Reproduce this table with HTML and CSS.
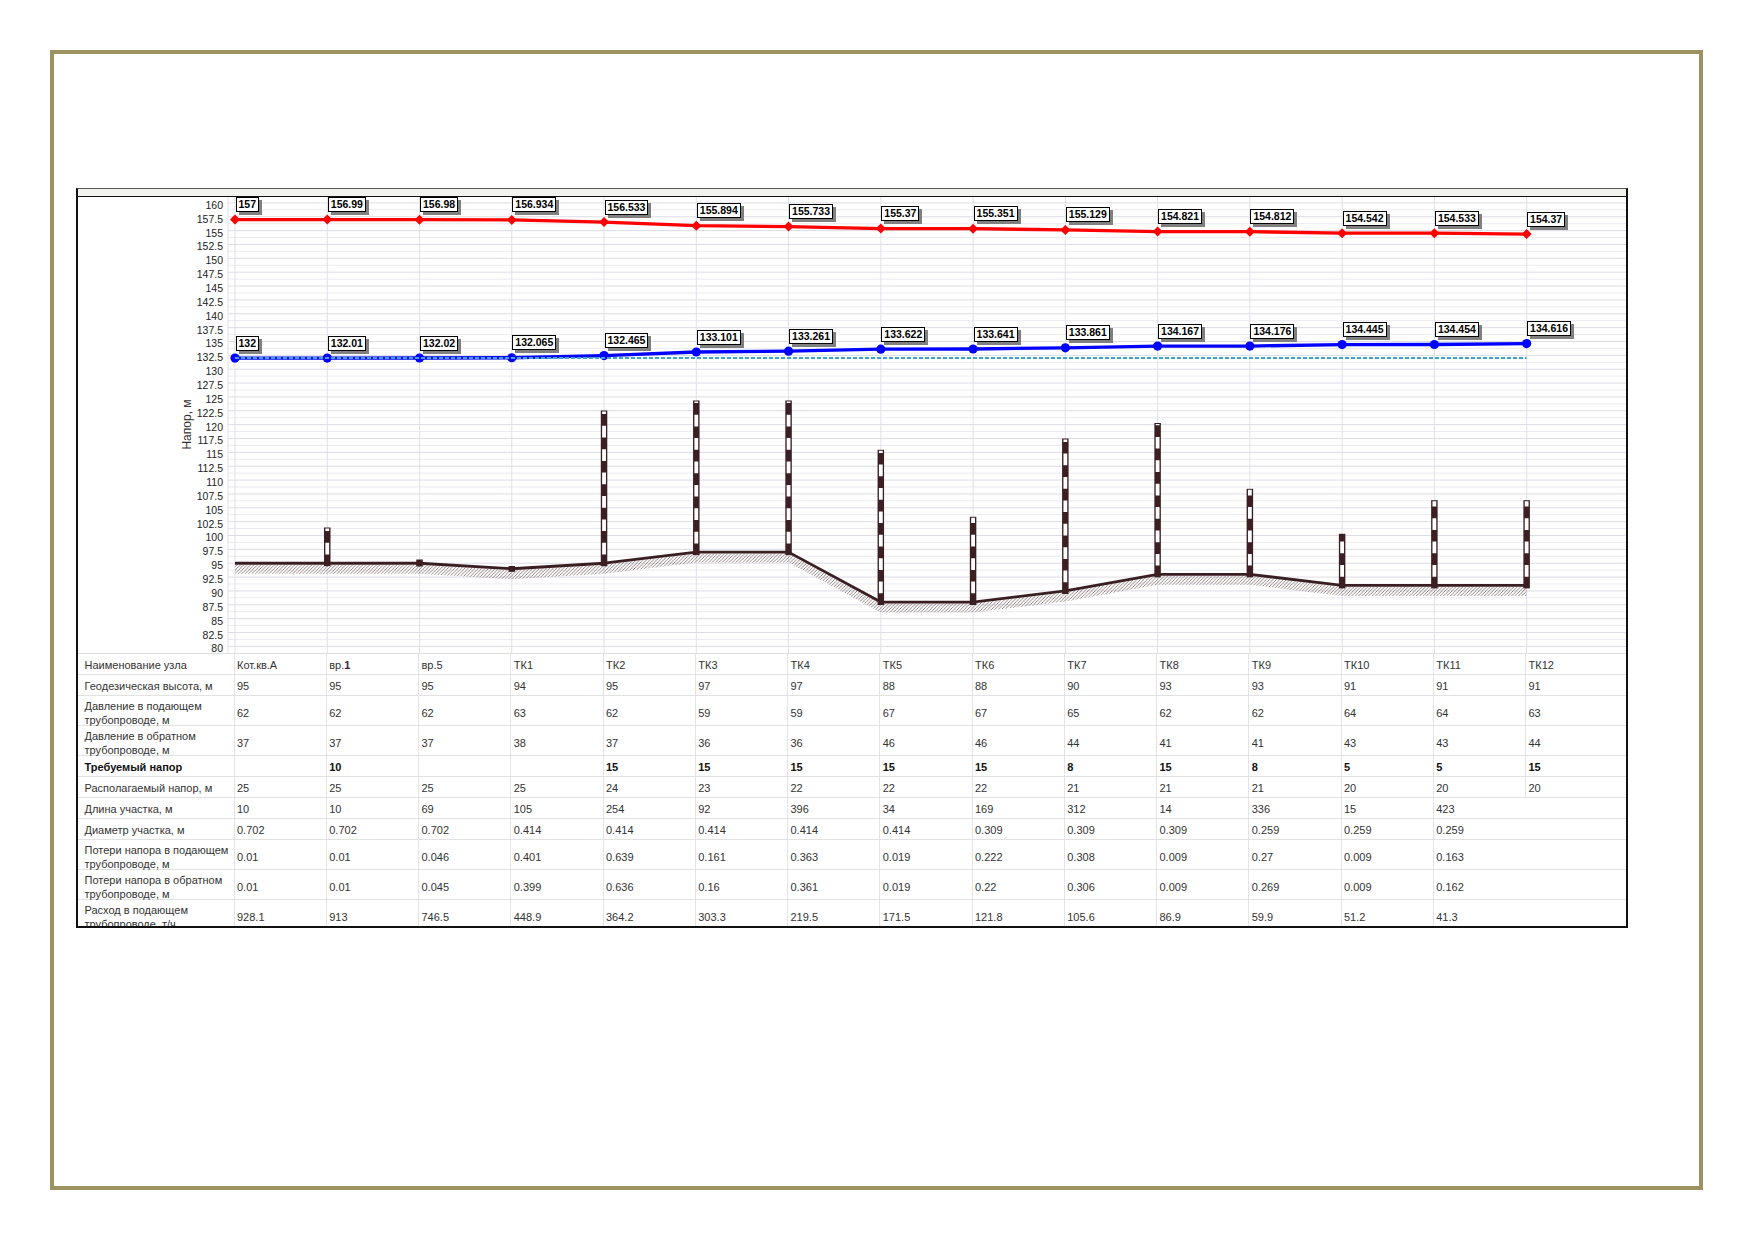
FILE: index.html
```html
<!DOCTYPE html>
<html lang="ru">
<head>
<meta charset="utf-8">
<title>Пьезометрический график</title>
<link rel="stylesheet" href="styles.css">
</head>
<body>
<div class="sheet">
  <div class="panel">
    <div class="strip"></div>
    <div class="chart">
      <svg class="chart-svg" width="1548" height="456" viewBox="78 197.5 1548 456" xmlns="http://www.w3.org/2000/svg">
        <defs>
          <pattern id="hatch" width="3.4" height="3.4" patternUnits="userSpaceOnUse">
            <path class="hatch-line" d="M-0.85,0.85L0.85,-0.85M0,3.4L3.4,0M2.55,4.25L4.25,2.55"/>
          </pattern>
        </defs>
        <path class="grid-minor" d="M228 210.33H1626M228 224.19H1626M228 238.04H1626M228 251.9H1626M228 265.76H1626M228 279.62H1626M228 293.47H1626M228 307.33H1626M228 321.19H1626M228 335.04H1626M228 348.9H1626M228 362.76H1626M228 376.61H1626M228 390.47H1626M228 404.33H1626M228 418.19H1626M228 432.04H1626M228 445.9H1626M228 459.76H1626M228 473.61H1626M228 487.47H1626M228 501.33H1626M228 515.18H1626M228 529.04H1626M228 542.9H1626M228 556.76H1626M228 570.61H1626M228 584.47H1626M228 598.33H1626M228 612.18H1626M228 626.04H1626M228 639.9H1626"/>
        <path class="grid-major" d="M228 203.4H1626M228 217.26H1626M228 231.12H1626M228 244.98H1626M228 258.84H1626M228 272.69H1626M228 286.55H1626M228 300.41H1626M228 314.27H1626M228 328.13H1626M228 341.99H1626M228 355.85H1626M228 369.71H1626M228 383.56H1626M228 397.42H1626M228 411.28H1626M228 425.14H1626M228 439H1626M228 452.86H1626M228 466.72H1626M228 480.58H1626M228 494.43H1626M228 508.29H1626M228 522.15H1626M228 536.01H1626M228 549.87H1626M228 563.73H1626M228 577.59H1626M228 591.45H1626M228 605.3H1626M228 619.16H1626M228 633.02H1626M228 646.88H1626"/>
        <path class="grid-vert" d="M228 197.5V653.5M235 197.5V653.5M327.26 197.5V653.5M419.52 197.5V653.5M511.78 197.5V653.5M604.04 197.5V653.5M696.3 197.5V653.5M788.56 197.5V653.5M880.82 197.5V653.5M973.08 197.5V653.5M1065.34 197.5V653.5M1157.6 197.5V653.5M1249.86 197.5V653.5M1342.12 197.5V653.5M1434.38 197.5V653.5M1526.64 197.5V653.5"/>

        <g class="ylabels" transform="translate(0 2.2)">
          <text x="223" y="207.2">160</text>
          <text x="223" y="221.06">157.5</text>
          <text x="223" y="234.92">155</text>
          <text x="223" y="248.78">152.5</text>
          <text x="223" y="262.64">150</text>
          <text x="223" y="276.49">147.5</text>
          <text x="223" y="290.35">145</text>
          <text x="223" y="304.21">142.5</text>
          <text x="223" y="318.07">140</text>
          <text x="223" y="331.93">137.5</text>
          <text x="223" y="345.79">135</text>
          <text x="223" y="359.65">132.5</text>
          <text x="223" y="373.51">130</text>
          <text x="223" y="387.36">127.5</text>
          <text x="223" y="401.22">125</text>
          <text x="223" y="415.08">122.5</text>
          <text x="223" y="428.94">120</text>
          <text x="223" y="442.8">117.5</text>
          <text x="223" y="456.66">115</text>
          <text x="223" y="470.52">112.5</text>
          <text x="223" y="484.38">110</text>
          <text x="223" y="498.23">107.5</text>
          <text x="223" y="512.09">105</text>
          <text x="223" y="525.95">102.5</text>
          <text x="223" y="539.81">100</text>
          <text x="223" y="553.67">97.5</text>
          <text x="223" y="567.53">95</text>
          <text x="223" y="581.39">92.5</text>
          <text x="223" y="595.25">90</text>
          <text x="223" y="609.1">87.5</text>
          <text x="223" y="622.96">85</text>
          <text x="223" y="636.82">82.5</text>
          <text x="223" y="650.68">80</text>
        </g>
        <text class="ytitle" transform="translate(190.8 425) rotate(-90)">Напор, м</text>

        <polygon class="ground-hatch" points="235,565 327.26,565 419.52,565 511.78,570.6 604.04,565 696.3,553.9 788.56,553.9 880.82,603.8 973.08,603.8 1065.34,592.8 1157.6,576.1 1249.86,576.1 1342.12,587.2 1434.38,587.2 1526.64,587.2 1526.64,596.4 1434.38,596.4 1342.12,596.4 1249.86,585.3 1157.6,585.3 1065.34,602 973.08,613 880.82,613 788.56,563.1 696.3,563.1 604.04,574.2 511.78,579.8 419.52,574.2 327.26,574.2 235,574.2"/>
        <polyline class="ground-line" points="235,563.73 327.26,563.73 419.52,563.73 511.78,569.27 604.04,563.73 696.3,552.64 788.56,552.64 880.82,602.53 973.08,602.53 1065.34,591.45 1157.6,574.81 1249.86,574.81 1342.12,585.9 1434.38,585.9 1526.64,585.9"/>

        <g class="bars">
          <rect class="bar" x="324.01" y="528" width="6.5" height="38.7"/>
          <line class="bar-w" x1="327.26" y1="566.7" x2="327.26" y2="529"/>
          <rect class="bar" x="416.27" y="560" width="6.5" height="7"/>
          <rect class="bar" x="508.53" y="566.5" width="6.5" height="5.8"/>
          <rect class="bar" x="600.79" y="411" width="6.5" height="155.7"/>
          <line class="bar-w" x1="604.04" y1="566.7" x2="604.04" y2="412"/>
          <rect class="bar" x="693.05" y="401" width="6.5" height="154.6"/>
          <line class="bar-w" x1="696.3" y1="555.6" x2="696.3" y2="402"/>
          <rect class="bar" x="785.31" y="401" width="6.5" height="154.6"/>
          <line class="bar-w" x1="788.56" y1="555.6" x2="788.56" y2="402"/>
          <rect class="bar" x="877.57" y="450.3" width="6.5" height="155.2"/>
          <line class="bar-w" x1="880.82" y1="605.5" x2="880.82" y2="451.3"/>
          <rect class="bar" x="969.83" y="517.3" width="6.5" height="88.2"/>
          <line class="bar-w" x1="973.08" y1="605.5" x2="973.08" y2="518.3"/>
          <rect class="bar" x="1062.09" y="439" width="6.5" height="155.5"/>
          <line class="bar-w" x1="1065.34" y1="594.5" x2="1065.34" y2="440"/>
          <rect class="bar" x="1154.35" y="423.5" width="6.5" height="154.3"/>
          <line class="bar-w" x1="1157.6" y1="577.8" x2="1157.6" y2="424.5"/>
          <rect class="bar" x="1246.61" y="489.3" width="6.5" height="88.5"/>
          <line class="bar-w" x1="1249.86" y1="577.8" x2="1249.86" y2="490.3"/>
          <rect class="bar" x="1338.87" y="534.3" width="6.5" height="54.6"/>
          <line class="bar-w" x1="1342.12" y1="588.9" x2="1342.12" y2="535.3"/>
          <rect class="bar" x="1431.13" y="500.7" width="6.5" height="88.2"/>
          <line class="bar-w" x1="1434.38" y1="588.9" x2="1434.38" y2="501.7"/>
          <rect class="bar" x="1523.39" y="500.7" width="6.5" height="88.2"/>
          <line class="bar-w" x1="1526.64" y1="588.9" x2="1526.64" y2="501.7"/>
        </g>

        <polyline class="supply-line" points="235,220.03 327.26,220.09 419.52,220.14 511.78,220.4 604.04,222.62 696.3,226.16 788.56,227.05 880.82,229.07 973.08,229.17 1065.34,230.4 1157.6,232.11 1249.86,232.16 1342.12,233.66 1434.38,233.71 1526.64,234.61"/>
        <path class="supply-mark" d="M235 215.03l5 5-5 5-5-5zM327.26 215.09l5 5-5 5-5-5zM419.52 215.14l5 5-5 5-5-5zM511.78 215.4l5 5-5 5-5-5zM604.04 217.62l5 5-5 5-5-5zM696.3 221.16l5 5-5 5-5-5zM788.56 222.05l5 5-5 5-5-5zM880.82 224.07l5 5-5 5-5-5zM973.08 224.17l5 5-5 5-5-5zM1065.34 225.4l5 5-5 5-5-5zM1157.6 227.11l5 5-5 5-5-5zM1249.86 227.16l5 5-5 5-5-5zM1342.12 228.66l5 5-5 5-5-5zM1434.38 228.71l5 5-5 5-5-5zM1526.64 229.61l5 5-5 5-5-5z"/>

        <polyline class="return-line" points="235,358.62 327.26,358.57 419.52,358.51 511.78,358.26 604.04,356.04 696.3,352.52 788.56,351.63 880.82,349.63 973.08,349.52 1065.34,348.3 1157.6,346.61 1249.86,346.56 1342.12,345.07 1434.38,345.02 1526.64,344.12"/>
        <g class="return-mark">
          <circle cx="235" cy="358.62" r="4.6"/>
          <circle cx="327.26" cy="358.57" r="4.6"/>
          <circle cx="419.52" cy="358.51" r="4.6"/>
          <circle cx="511.78" cy="358.26" r="4.6"/>
          <circle cx="604.04" cy="356.04" r="4.6"/>
          <circle cx="696.3" cy="352.52" r="4.6"/>
          <circle cx="788.56" cy="351.63" r="4.6"/>
          <circle cx="880.82" cy="349.63" r="4.6"/>
          <circle cx="973.08" cy="349.52" r="4.6"/>
          <circle cx="1065.34" cy="348.3" r="4.6"/>
          <circle cx="1157.6" cy="346.61" r="4.6"/>
          <circle cx="1249.86" cy="346.56" r="4.6"/>
          <circle cx="1342.12" cy="345.07" r="4.6"/>
          <circle cx="1434.38" cy="345.02" r="4.6"/>
          <circle cx="1526.64" cy="344.12" r="4.6"/>
        </g>
        <path class="static-line" d="M235 358.62H1526.64"/>
      </svg>

      <div class="tag" style="left:158px;top:0.5px">157</div>
      <div class="tag" style="left:250.3px;top:0.6px">156.99</div>
      <div class="tag" style="left:342.5px;top:0.6px">156.98</div>
      <div class="tag" style="left:434.8px;top:0.9px">156.934</div>
      <div class="tag" style="left:527px;top:3.1px">156.533</div>
      <div class="tag" style="left:619.3px;top:6.7px">155.894</div>
      <div class="tag" style="left:711.6px;top:7.6px">155.733</div>
      <div class="tag" style="left:803.8px;top:9.6px">155.37</div>
      <div class="tag" style="left:896.1px;top:9.7px">155.351</div>
      <div class="tag" style="left:988.3px;top:10.9px">155.129</div>
      <div class="tag" style="left:1080.6px;top:12.6px">154.821</div>
      <div class="tag" style="left:1172.9px;top:12.7px">154.812</div>
      <div class="tag" style="left:1265.1px;top:14.2px">154.542</div>
      <div class="tag" style="left:1357.4px;top:14.2px">154.533</div>
      <div class="tag" style="left:1449.6px;top:15.1px">154.37</div>

      <div class="tag" style="left:158px;top:139.1px">132</div>
      <div class="tag" style="left:250.3px;top:139.1px">132.01</div>
      <div class="tag" style="left:342.5px;top:139px">132.02</div>
      <div class="tag" style="left:434.8px;top:138.8px">132.065</div>
      <div class="tag" style="left:527px;top:136.5px">132.465</div>
      <div class="tag" style="left:619.3px;top:133px">133.101</div>
      <div class="tag" style="left:711.6px;top:132.1px">133.261</div>
      <div class="tag" style="left:803.8px;top:130.1px">133.622</div>
      <div class="tag" style="left:896.1px;top:130px">133.641</div>
      <div class="tag" style="left:988.3px;top:128.8px">133.861</div>
      <div class="tag" style="left:1080.6px;top:127.1px">134.167</div>
      <div class="tag" style="left:1172.9px;top:127.1px">134.176</div>
      <div class="tag" style="left:1265.1px;top:125.6px">134.445</div>
      <div class="tag" style="left:1357.4px;top:125.5px">134.454</div>
      <div class="tag" style="left:1449.6px;top:124.6px">134.616</div>
    </div>

    <div class="table">
      <div class="row">
        <div class="lab">Наименование узла</div>
        <div class="cell">Кот.кв.А</div><div class="cell">вр.<span class="hl">1</span></div><div class="cell">вр.5</div><div class="cell">ТК1</div><div class="cell">ТК2</div><div class="cell">ТК3</div><div class="cell">ТК4</div><div class="cell">ТК5</div><div class="cell">ТК6</div><div class="cell">ТК7</div><div class="cell">ТК8</div><div class="cell">ТК9</div><div class="cell">ТК10</div><div class="cell">ТК11</div><div class="cell">ТК12</div>
      </div>
      <div class="row">
        <div class="lab">Геодезическая высота, м</div>
        <div class="cell">95</div><div class="cell">95</div><div class="cell">95</div><div class="cell">94</div><div class="cell">95</div><div class="cell">97</div><div class="cell">97</div><div class="cell">88</div><div class="cell">88</div><div class="cell">90</div><div class="cell">93</div><div class="cell">93</div><div class="cell">91</div><div class="cell">91</div><div class="cell">91</div>
      </div>
      <div class="row tall">
        <div class="lab">Давление в подающем<br>трубопроводе, м</div>
        <div class="cell">62</div><div class="cell">62</div><div class="cell">62</div><div class="cell">63</div><div class="cell">62</div><div class="cell">59</div><div class="cell">59</div><div class="cell">67</div><div class="cell">67</div><div class="cell">65</div><div class="cell">62</div><div class="cell">62</div><div class="cell">64</div><div class="cell">64</div><div class="cell">63</div>
      </div>
      <div class="row tall">
        <div class="lab">Давление в обратном<br>трубопроводе, м</div>
        <div class="cell">37</div><div class="cell">37</div><div class="cell">37</div><div class="cell">38</div><div class="cell">37</div><div class="cell">36</div><div class="cell">36</div><div class="cell">46</div><div class="cell">46</div><div class="cell">44</div><div class="cell">41</div><div class="cell">41</div><div class="cell">43</div><div class="cell">43</div><div class="cell">44</div>
      </div>
      <div class="row strong">
        <div class="lab">Требуемый напор</div>
        <div class="cell"></div><div class="cell">10</div><div class="cell"></div><div class="cell"></div><div class="cell">15</div><div class="cell">15</div><div class="cell">15</div><div class="cell">15</div><div class="cell">15</div><div class="cell">8</div><div class="cell">15</div><div class="cell">8</div><div class="cell">5</div><div class="cell">5</div><div class="cell">15</div>
      </div>
      <div class="row">
        <div class="lab">Располагаемый напор, м</div>
        <div class="cell">25</div><div class="cell">25</div><div class="cell">25</div><div class="cell">25</div><div class="cell">24</div><div class="cell">23</div><div class="cell">22</div><div class="cell">22</div><div class="cell">22</div><div class="cell">21</div><div class="cell">21</div><div class="cell">21</div><div class="cell">20</div><div class="cell">20</div><div class="cell">20</div>
      </div>
      <div class="row">
        <div class="lab">Длина участка, м</div>
        <div class="cell">10</div><div class="cell">10</div><div class="cell">69</div><div class="cell">105</div><div class="cell">254</div><div class="cell">92</div><div class="cell">396</div><div class="cell">34</div><div class="cell">169</div><div class="cell">312</div><div class="cell">14</div><div class="cell">336</div><div class="cell">15</div><div class="cell">423</div><div class="cell blank"></div>
      </div>
      <div class="row">
        <div class="lab">Диаметр участка, м</div>
        <div class="cell">0.702</div><div class="cell">0.702</div><div class="cell">0.702</div><div class="cell">0.414</div><div class="cell">0.414</div><div class="cell">0.414</div><div class="cell">0.414</div><div class="cell">0.414</div><div class="cell">0.309</div><div class="cell">0.309</div><div class="cell">0.309</div><div class="cell">0.259</div><div class="cell">0.259</div><div class="cell">0.259</div><div class="cell blank"></div>
      </div>
      <div class="row tall">
        <div class="lab">Потери напора в подающем<br>трубопроводе, м</div>
        <div class="cell">0.01</div><div class="cell">0.01</div><div class="cell">0.046</div><div class="cell">0.401</div><div class="cell">0.639</div><div class="cell">0.161</div><div class="cell">0.363</div><div class="cell">0.019</div><div class="cell">0.222</div><div class="cell">0.308</div><div class="cell">0.009</div><div class="cell">0.27</div><div class="cell">0.009</div><div class="cell">0.163</div><div class="cell blank"></div>
      </div>
      <div class="row tall">
        <div class="lab">Потери напора в обратном<br>трубопроводе, м</div>
        <div class="cell">0.01</div><div class="cell">0.01</div><div class="cell">0.045</div><div class="cell">0.399</div><div class="cell">0.636</div><div class="cell">0.16</div><div class="cell">0.361</div><div class="cell">0.019</div><div class="cell">0.22</div><div class="cell">0.306</div><div class="cell">0.009</div><div class="cell">0.269</div><div class="cell">0.009</div><div class="cell">0.162</div><div class="cell blank"></div>
      </div>
      <div class="row tall">
        <div class="lab">Расход в подающем<br>трубопроводе, т/ч</div>
        <div class="cell">928.1</div><div class="cell">913</div><div class="cell">746.5</div><div class="cell">448.9</div><div class="cell">364.2</div><div class="cell">303.3</div><div class="cell">219.5</div><div class="cell">171.5</div><div class="cell">121.8</div><div class="cell">105.6</div><div class="cell">86.9</div><div class="cell">59.9</div><div class="cell">51.2</div><div class="cell">41.3</div><div class="cell blank"></div>
      </div>
    </div>
  </div>
</div>
</body>
</html>
```

FILE: styles.css
```css
html, body {
  margin: 0;
  padding: 0;
  background: #ffffff;
}

body {
  font-family: "Liberation Sans", Arial, sans-serif;
  width: 1752px;
  height: 1239px;
  overflow: hidden;
}

.sheet {
  box-sizing: border-box;
  width: 1653px;
  height: 1140px;
  margin: 50px 0 0 50px;
  border: 4.5px solid #9d9161;
  padding: 133.5px 0 0 21.5px;
}

.panel {
  box-sizing: border-box;
  width: 1552px;
  height: 740px;
  border: 2px solid #111111;
  border-top: 1px solid #555555;
  overflow: hidden;
  display: flex;
  flex-direction: column;
  background: #ffffff;
}

.strip {
  flex: none;
  height: 7px;
  background: #f2f2ee;
  border-bottom: 1.5px solid #111111;
}

.chart {
  position: relative;
  flex: none;
  height: 456px;
}

.chart-svg {
  display: block;
}

/* chart drawing */
.grid-minor {
  fill: none;
  stroke: #ebebf0;
  stroke-width: 1;
}

.grid-major {
  fill: none;
  stroke: #dcdce5;
  stroke-width: 1;
}

.grid-vert {
  fill: none;
  stroke: #dfe0ec;
  stroke-width: 1;
}

.ylabels text {
  font-family: "Liberation Sans", Arial, sans-serif;
  font-size: 10.5px;
  fill: #222222;
  text-anchor: end;
}

.ytitle {
  font-family: "Liberation Sans", Arial, sans-serif;
  font-size: 12px;
  fill: #333333;
  text-anchor: middle;
}

.hatch-line {
  stroke: #7a6565;
  stroke-width: 0.8;
  fill: none;
}

.ground-hatch {
  fill: url(#hatch);
  stroke: none;
}

.ground-line {
  fill: none;
  stroke: #3a1f22;
  stroke-width: 2.8;
  stroke-linejoin: round;
}

.bar {
  fill: #3b1f22;
}

.bar-w {
  stroke: #ffffff;
  stroke-width: 3.8;
  stroke-dasharray: 11.7 11.7;
  stroke-dashoffset: 11.7;
}

.supply-line {
  fill: none;
  stroke: #ff0000;
  stroke-width: 3.3;
  stroke-linejoin: round;
}

.supply-mark {
  fill: #ff0000;
}

.return-line {
  fill: none;
  stroke: #0000ff;
  stroke-width: 3.3;
  stroke-linejoin: round;
}

.return-mark circle {
  fill: #0000ff;
}

.static-line {
  fill: none;
  stroke: #3aa6cf;
  stroke-width: 2;
  stroke-dasharray: 4 2;
}

/* value tags over the chart */
.tag {
  position: absolute;
  box-sizing: border-box;
  height: 15px;
  padding: 0 2px;
  border: 1px solid #000000;
  background: #ffffff;
  box-shadow: 3px 3px 0 #808080;
  font-family: "Liberation Sans", Arial, sans-serif;
  font-weight: bold;
  font-size: 10.5px;
  line-height: 13px;
  color: #000000;
  white-space: nowrap;
}

/* data table */
.table {
  flex: none;
  border-top: 1px solid #dedede;
  font-size: 11px;
  color: #333333;
}

.row {
  box-sizing: border-box;
  display: grid;
  grid-template-columns: 156px repeat(14, 92.26px) 1fr;
  height: 21px;
  border-bottom: 1px solid #e2e2e2;
}

.row.tall {
  height: 30px;
}

.lab {
  display: flex;
  align-items: center;
  padding: 3px 0 0 7px;
  line-height: 14.5px;
  white-space: nowrap;
}

.cell {
  display: flex;
  align-items: center;
  padding: 3px 0 0 2.5px;
  border-left: 1px solid #e3e3ec;
  white-space: nowrap;
}

.cell.blank {
  border-left-color: transparent;
}

.row.strong .lab,
.row.strong .cell {
  font-weight: bold;
  color: #111111;
}

.hl {
  font-weight: bold;
  color: #3d1f3d;
}
```
